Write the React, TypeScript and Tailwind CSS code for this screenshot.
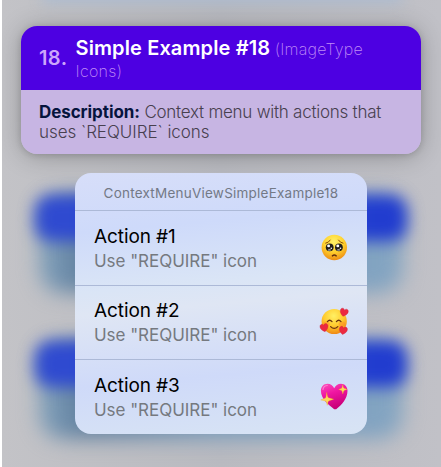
import React from "react";

function PleadingFace() {
  return (
    <svg viewBox="0 0 28 28" className="size-7">
      <defs>
        <radialGradient id="faceA" cx="48%" cy="28%" r="72%">
          <stop offset="0" stopColor="#fff36a" />
          <stop offset=".55" stopColor="#ffd12e" />
          <stop offset="1" stopColor="#ee8d13" />
        </radialGradient>
      </defs>
      <circle cx="14.3" cy="14.5" r="12.7" fill="url(#faceA)" />
      <path d="M5.7 10.2Q8.7 9.7 10.2 7.1M18.5 7.1Q20 9.7 23 10.2" fill="none" stroke="#8e4b08" strokeWidth="1" strokeLinecap="round" />
      <circle cx="9.7" cy="14.3" r="3.9" fill="#211d1b" />
      <circle cx="18.9" cy="14.3" r="3.9" fill="#211d1b" />
      <g fill="#fff">
        <circle cx="8.6" cy="12.9" r="1.45" />
        <circle cx="17.8" cy="12.9" r="1.45" />
        <circle cx="11.3" cy="15.3" r=".8" />
        <circle cx="20.5" cy="15.3" r=".8" />
        <ellipse cx="9.4" cy="16.9" rx="1.6" ry=".65" opacity=".75" />
        <ellipse cx="18.6" cy="16.9" rx="1.6" ry=".65" opacity=".75" />
      </g>
      <path d="M12.4 22.9Q14.3 21.3 16.2 22.9" fill="none" stroke="#68300c" strokeWidth="1.4" strokeLinecap="round" />
    </svg>
  );
}

const HEART = "M0 4.2C-2.8 2.4-4.3.4-4-1.7-3.6-4.2-.8-4.4 0-2.2.8-4.4 3.6-4.2 4-1.7 4.3.4 2.8 2.4 0 4.2Z";

function LovingFace() {
  return (
    <svg viewBox="0 0 28 28" className="size-7 overflow-visible">
      <defs>
        <radialGradient id="faceB" cx="48%" cy="28%" r="72%">
          <stop offset="0" stopColor="#fff064" />
          <stop offset=".55" stopColor="#ffcb2d" />
          <stop offset="1" stopColor="#ef8714" />
        </radialGradient>
      </defs>
      <circle cx="14.2" cy="14.5" r="12.6" fill="url(#faceB)" />
      <g fill="#ff8726" opacity=".45">
        <ellipse cx="6.4" cy="17" rx="3.4" ry="2.5" />
        <ellipse cx="22" cy="17" rx="3.4" ry="2.5" />
      </g>
      <path d="M7.4 14.6Q9.6 11.9 12 14.6M16.4 14.6Q18.7 11.9 21 14.6M10.6 19.6Q14.2 23.3 17.8 19.6" fill="none" stroke="#6b3610" strokeWidth="1.3" strokeLinecap="round" />
      <g fill="#ec2940" stroke="#c91a32" strokeWidth=".3">
        <path d={HEART} transform="translate(24 5.3) rotate(15)" />
        <path d={HEART} transform="translate(4.2 20.6) rotate(-12)" />
        <path d={HEART} transform="translate(23.2 23.4) rotate(10)" />
      </g>
    </svg>
  );
}

function SparklingHeart() {
  return (
    <svg viewBox="0 0 28 28" className="size-7">
      <defs>
        <linearGradient id="pinkHeart" x1="0" y1="0" x2="0.35" y2="1">
          <stop offset="0" stopColor="#ff50bd" />
          <stop offset=".45" stopColor="#ef16a2" />
          <stop offset="1" stopColor="#c90078" />
        </linearGradient>
      </defs>
      <path d="M14.2 27.2C9 23.4.9 17 .9 8.8.9 4.5 3.7 1.7 7.5 1.7c3 0 5.5 1.9 6.7 4.6 1.2-2.7 3.7-4.6 6.7-4.6 3.8 0 6.6 2.8 6.6 7.1 0 8.2-6 14.2-11.3 18.4Z" fill="url(#pinkHeart)" />
      <path d="M3 7.5Q3.5 3.9 7.2 3.5" fill="none" stroke="#ff9bdc" strokeWidth="1.2" strokeLinecap="round" opacity=".7" />
      <g fill="#ffd75b" stroke="#edaa19" strokeWidth=".3">
        <path d="M6.7 10.2Q7.4 15.2 8.5 15.8L13.7 17.2 8.6 19Q7.8 19.8 7.3 23.3 6.4 19.6 5.6 19L.8 17.9 5.5 15.9Q6.2 15 6.7 10.2Z" />
        <path d="M22.7 2.6Q23.1 5.7 24 6.3L27.2 7.2 24.1 8.5Q23.4 9 22.8 12.1 22.3 8.9 21.5 8.4L18.6 7.4 21.6 6.2Q22.2 5.7 22.7 2.6Z" />
      </g>
    </svg>
  );
}

const ACTIONS = [
  { title: "Action #1", Icon: PleadingFace },
  { title: "Action #2", Icon: LovingFace },
  { title: "Action #3", Icon: SparklingHeart },
];

/* Out-of-focus list card behind the menu. */
function BlurredCard() {
  return (
    <div className="relative h-[98px] w-[372px]">
      <div className="mx-1 h-[98px] rounded-3xl bg-[linear-gradient(90deg,#83a3bd_0%,#62809f_12%,#7a9cbb_50%,#84a5c2_100%)] blur-[10px]" />
      <div className="absolute inset-x-0 top-0 h-[46px] rounded-2xl bg-gradient-to-r from-[#304bd0] to-[#203bcf] blur-[8px]" />
    </div>
  );
}

export default function App() {
  return (
    <div className="h-[467px] w-[441px] overflow-hidden bg-white pl-0.5 font-['Inter',sans-serif]">
      <div className="relative h-full overflow-hidden bg-gradient-to-r from-[#c3c3c7] via-[#b9bac0] to-[#c1c1c7] pt-[26px] pl-[19px]">
        <div className="absolute -top-3 left-10 h-3.5 w-[360px] bg-[#a9bad0] blur-[7px]" />
        <div className="absolute top-[195px] left-[33px] flex flex-col gap-12">
          <BlurredCard />
          <BlurredCard />
        </div>

        <section className="relative h-32 w-[400px] rounded-2xl shadow-[0_2px_24px_rgba(0,0,0,0.25),0_1px_6px_rgba(0,0,0,0.14)]">
          <header className="flex h-16 items-center rounded-t-2xl bg-[#4d00e2] pl-[18px]">
            <span className="w-[36.5px] text-[20px] font-semibold tracking-[0.4px] text-[#cda6fb]">18.</span>
            <div className="pt-0.5 text-[16px] leading-[22px] font-extralight whitespace-nowrap text-[#c08cf7]">
              <span className="text-[20px] font-semibold tracking-[0.12px] text-white">Simple Example #18</span>{" "}
              <span className="tracking-[0.25px]">(ImageType</span>
              <br />
              <span className="tracking-[0.3px]">Icons)</span>
            </div>
          </header>
          <div className="h-16 rounded-b-2xl bg-[#c7b5e3] pt-3 pl-[18px] text-[17px] leading-5 tracking-[-0.25px] whitespace-nowrap text-[#47404f]">
            <b className="tracking-[-0.08px] text-[#06143d]">Description:</b>{" "}
            <span className="font-light">Context menu with actions that<br /><span className="tracking-[-0.05px]">uses `REQUIRE` icons</span></span>
          </div>
        </section>

        <nav className="relative mt-[18.5px] ml-[54px] h-[261.5px] w-[292px] overflow-hidden rounded-2xl bg-[linear-gradient(175deg,#d7def9_0%,#cedafa_21%,#dae5f6_42%,#dfe6f4_50%,#cfdaf9_75%,#d8e4f4_100%)]">
          <div className="flex h-[38.5px] items-center justify-center border-b border-[#acb9d7] pt-1 text-[13.5px] tracking-[0.23px] text-[#737986]">
            ContextMenuViewSimpleExample18
          </div>
          {ACTIONS.map(({ title, Icon }) => (
            <div key={title} className="flex h-[74.5px] items-center justify-between border-b border-[#acb9d7] pr-[19px] pl-[19px] last:border-b-0">
              <div className="pt-0.5 whitespace-nowrap">
                <div className="text-[19px] leading-6 tracking-[-0.1px] text-black">{title}</div>
                <div className="text-[17px] leading-6 tracking-[-0.03px] text-[#75797f]">Use "REQUIRE" icon</div>
              </div>
              <div className="pb-0.5">
                <Icon />
              </div>
            </div>
          ))}
        </nav>
      </div>
    </div>
  );
}
